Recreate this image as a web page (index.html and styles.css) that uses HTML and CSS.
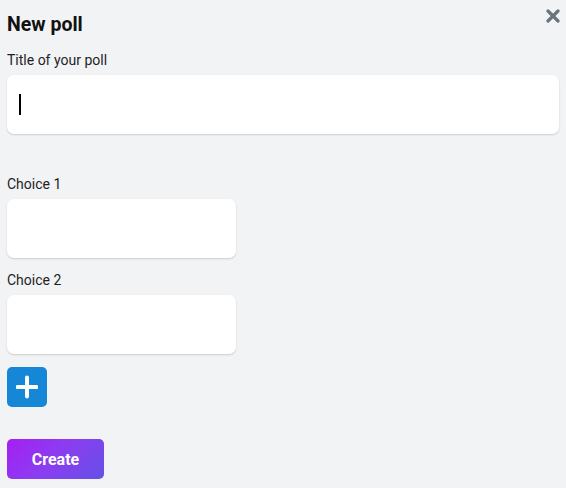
FILE: index.html
```html
<!DOCTYPE html>
<html>
<head>
<meta charset="utf-8">
<link rel="stylesheet" href="styles.css">
</head>
<body>
<div class="modal">
  <div class="header">
    <h2 class="title">New poll</h2>
    <button class="close" aria-label="Close">
      <svg width="14" height="14" viewBox="0 0 14 14"><path d="M2 2L12 12M12 2L2 12" stroke="#6b7280" stroke-width="3.2" stroke-linecap="round"/></svg>
    </button>
  </div>
  <label class="label">Title of your poll</label>
  <div class="input wide"><span class="caret"></span></div>
  <div class="choices">
    <label class="label">Choice 1</label>
    <div class="input narrow"></div>
    <label class="label">Choice 2</label>
    <div class="input narrow"></div>
  </div>
  <button class="add" aria-label="Add choice">
    <svg width="22" height="24" viewBox="0 0 22 24"><path d="M11 2.5V21.5M1.5 12H20.5" stroke="#fff" stroke-width="4" stroke-linecap="round"/></svg>
  </button>
  <button class="create">Create</button>
</div>
</body>
</html>
```
FILE: styles.css
```css
html, body {
  margin: 0;
  padding: 0;
  background: #f2f3f5;
  font-family: Roboto, "Liberation Sans", sans-serif;
  color: #1f1f1f;
}
.modal {
  display: flex;
  flex-direction: column;
  align-items: flex-start;
  padding: 14px 7px 0 7px;
}
.header {
  align-self: stretch;
  display: flex;
  justify-content: space-between;
  align-items: flex-start;
  position: relative;
}
.title {
  margin: 0;
  font-size: 19.5px;
  font-weight: 700;
  line-height: 22px;
  color: #111;
}
.close {
  position: absolute;
  right: -1px;
  top: -5px;
  border: 0;
  padding: 0;
  background: none;
  width: 14px;
  height: 14px;
  display: flex;
}
.label {
  font-size: 14px;
  line-height: 17px;
  color: #1f1f1f;
  margin-top: 16px;
}
.input {
  background: #fff;
  border-radius: 7px;
  box-shadow: 0 1px 2px rgba(0,0,0,0.16);
  height: 59px;
  box-sizing: border-box;
  margin-top: 6px;
  display: flex;
  align-items: center;
}
.wide {
  align-self: stretch;
  padding-left: 12px;
}
.caret {
  width: 1.5px;
  height: 21px;
  background: #000;
}
.choices {
  display: flex;
  flex-direction: column;
  margin-top: 42px;
}
.choices .label {
  margin-top: 14px;
}
.choices .label:first-child {
  margin-top: 0;
}
.narrow {
  width: 229px;
  margin-top: 6px;
}
.add {
  margin-top: 13px;
  width: 40px;
  height: 40px;
  border: 0;
  border-radius: 5px;
  background: #1587d6;
  display: flex;
  align-items: center;
  justify-content: center;
  padding: 0;
}
.create {
  margin-top: 32px;
  width: 97px;
  height: 40px;
  border: 0;
  border-radius: 5px;
  background: linear-gradient(135deg, #a51ff5 0%, #8a3ef0 50%, #6550e6 100%);
  color: #fff;
  font-family: Roboto, "Liberation Sans", sans-serif;
  font-size: 16px;
  font-weight: 700;
  padding: 0;
}
```
